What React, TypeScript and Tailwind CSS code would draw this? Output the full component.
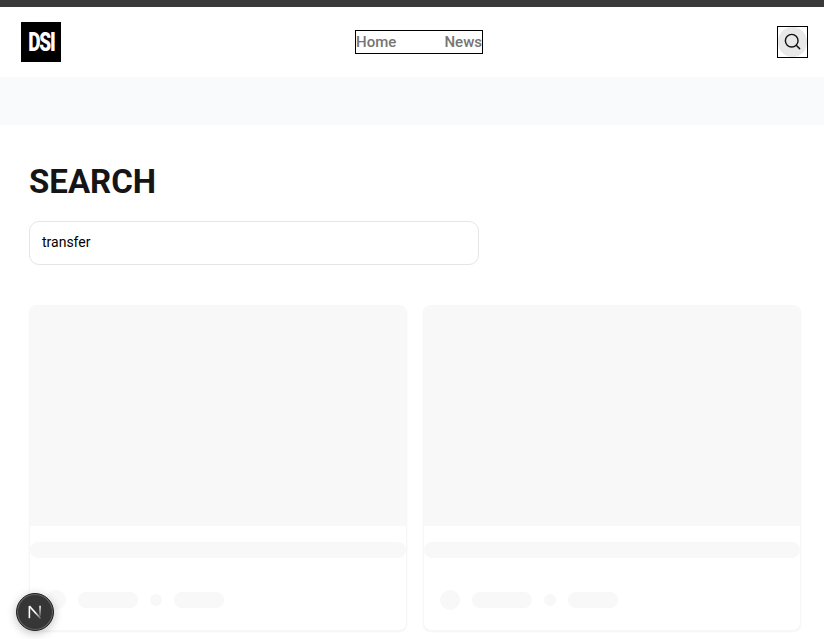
import React from 'react';
import { Search } from 'lucide-react';

const SkeletonCard: React.FC = () => (
  <div className="rounded-lg bg-white border border-[#f7f7f7] shadow-[0_1px_2px_rgba(0,0,0,0.05)] overflow-hidden h-[326px]">
    <div className="h-[220px] bg-[#f8f8f8]" />
    <div className="h-4 mt-4 rounded-full bg-[#f8f8f8]" />
    <div className="flex items-center gap-3 mt-8 pl-4">
      <div className="w-5 h-5 rounded-full bg-[#f8f8f8]" />
      <div className="w-[60px] h-4 rounded-full bg-[#f8f8f8]" />
      <div className="w-3 h-3 rounded-full bg-[#f8f8f8]" />
      <div className="w-[50px] h-4 rounded-full bg-[#f8f8f8]" />
    </div>
  </div>
);

const App: React.FC = () => {
  return (
    <div className="h-screen overflow-hidden bg-white font-['Roboto',sans-serif]">
      <div className="h-[7px] bg-[#3a3a3a]" />

      <header className="flex items-center justify-between h-[70px] pl-[21px] pr-4">
        <div className="flex items-center justify-center w-10 h-10 bg-black">
          <span className="text-white text-[25px] leading-none font-black tracking-[-1.5px] scale-x-[0.76]">DSI</span>
        </div>
        <nav className="flex items-center justify-between w-[128px] h-6 border border-black text-[15px] font-medium text-[#757575]">
          <a>Home</a>
          <a>News</a>
        </nav>
        <button className="flex items-center justify-center w-[31px] h-8 border border-black text-[#111]">
          <span className="flex items-center justify-center w-full h-full pb-px rounded-full bg-[#e8e8e8]">
            <Search size={19} strokeWidth={1.8} />
          </span>
        </button>
      </header>

      <div className="h-12 bg-[#f9fafb]" />

      <main className="pt-9 pl-[29px] pr-[23px]">
        <h1 className="text-[33px] leading-[42px] font-bold text-[#151515]">SEARCH</h1>
        <div className="flex items-center mt-[18px] w-[450px] h-11 px-3 pb-0.5 rounded-[10px] border border-[#e5e5e5] text-sm text-black">
          transfer
        </div>
        <div className="grid grid-cols-2 gap-4 mt-10">
          <SkeletonCard />
          <SkeletonCard />
        </div>
      </main>

      <div className="fixed left-4 bottom-2 flex items-center justify-center w-[38px] h-[38px] rounded-full bg-[#363636] border border-[#222] shadow-[0_2px_10px_rgba(0,0,0,0.25),inset_0_0_0_1px_rgba(255,255,255,0.25)]">
        <svg width="18" height="18" viewBox="0 0 16 16" fill="none">
          <defs>
            <linearGradient id="nDiag" x1="3" y1="3" x2="13" y2="14" gradientUnits="userSpaceOnUse">
              <stop offset="0.5" stopColor="#fff" />
              <stop offset="1" stopColor="#fff" stopOpacity="0.2" />
            </linearGradient>
            <linearGradient id="nStem" x1="12.5" y1="2.5" x2="12.5" y2="11" gradientUnits="userSpaceOnUse">
              <stop offset="0" stopColor="#fff" />
              <stop offset="1" stopColor="#fff" stopOpacity="0.2" />
            </linearGradient>
          </defs>
          <path d="M3 13.5V2.8" stroke="#fff" strokeWidth="1.4" />
          <path d="M3 2.8l10 11" stroke="url(#nDiag)" strokeWidth="1.4" />
          <path d="M12.5 2.5v9" stroke="url(#nStem)" strokeWidth="1.4" />
        </svg>
      </div>
    </div>
  );
};

export default App;
